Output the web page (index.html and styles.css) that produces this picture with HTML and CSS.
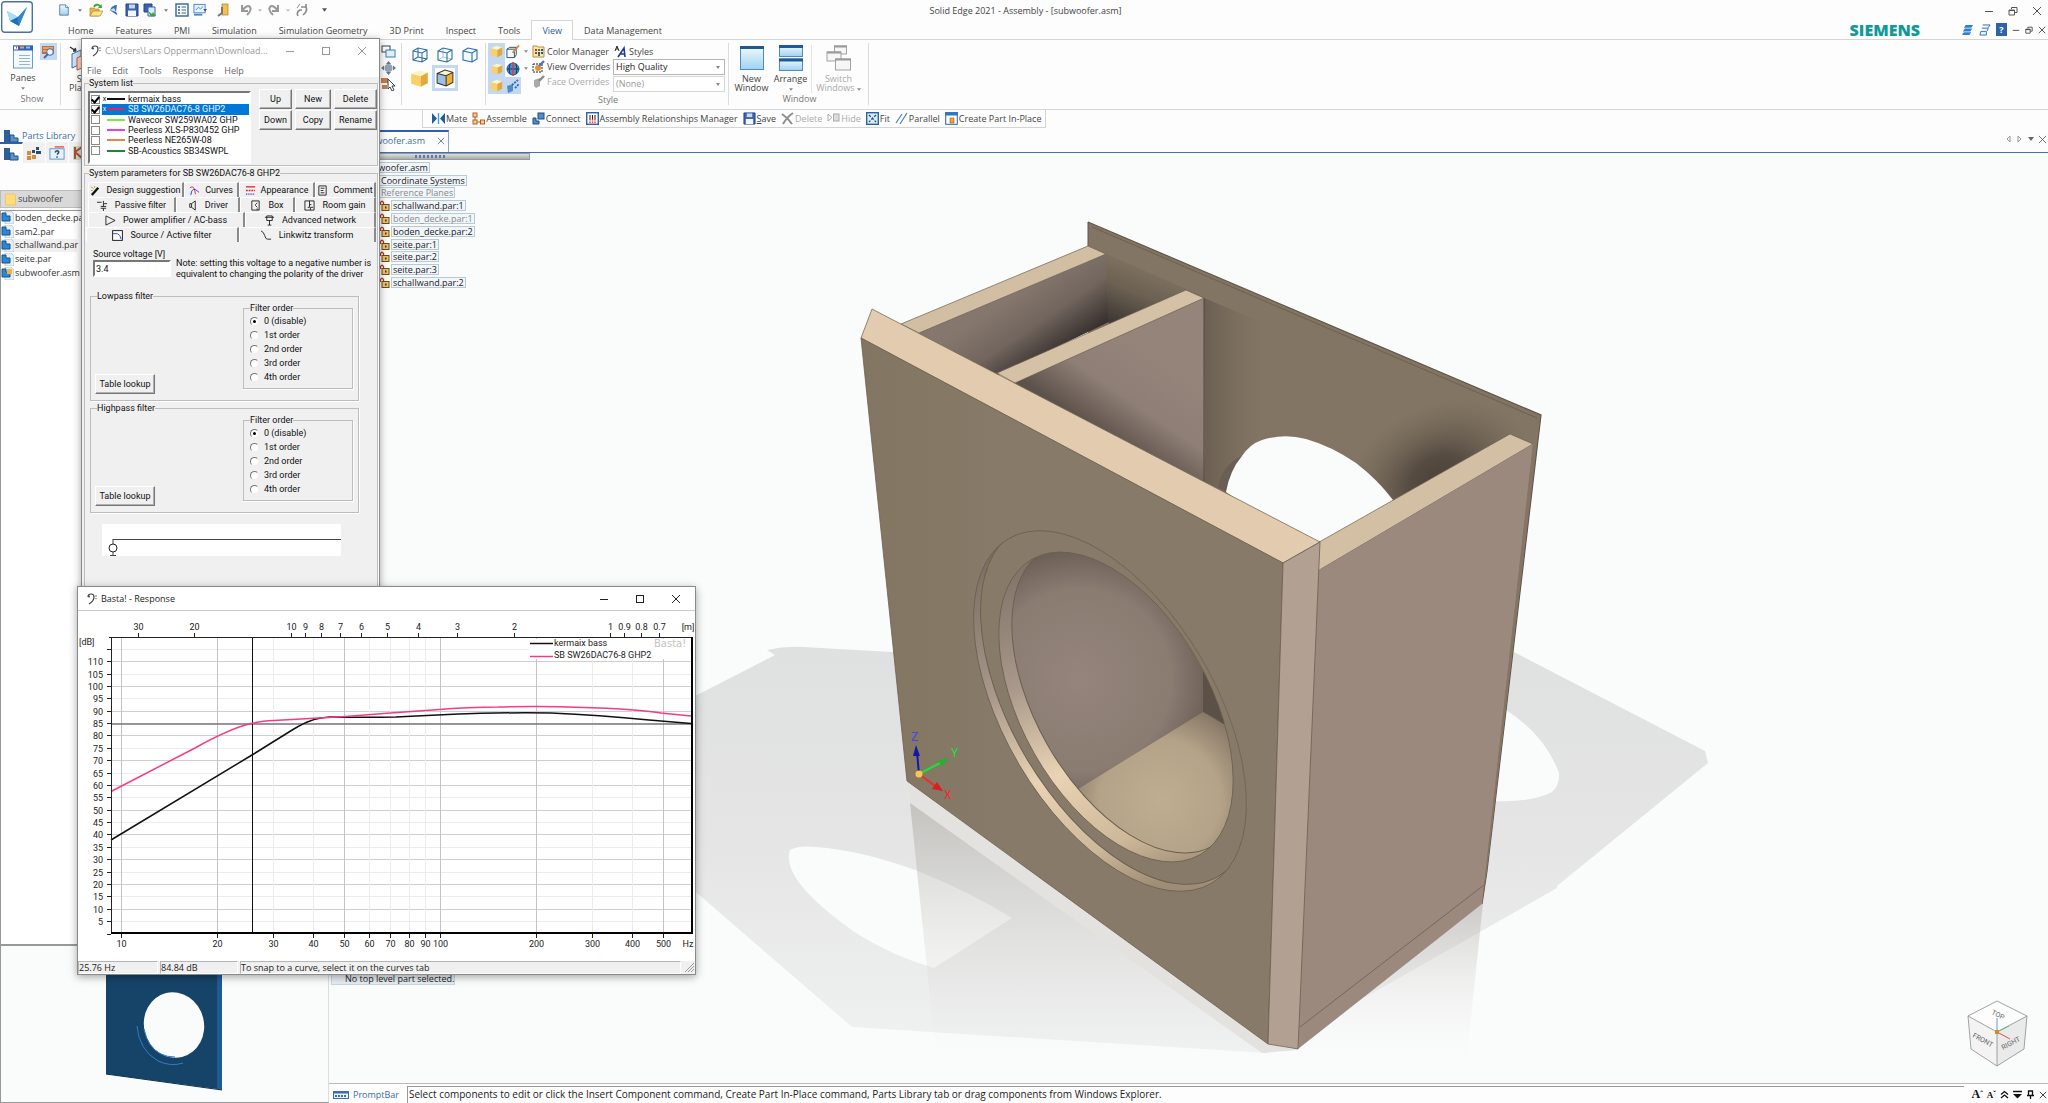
FILE: index.html
```html
<!DOCTYPE html>
<html lang="en">
<head>
<meta charset="utf-8">
<title>Solid Edge 2021 - Assembly - [subwoofer.asm]</title>
<link rel="stylesheet" href="styles.css">
</head>
<body>
<svg class="sprite" aria-hidden="true">
  <defs>
    <linearGradient id="gold" x1="0" y1="0" x2="1" y2="1"><stop offset="0" stop-color="#ffeeb0"/><stop offset="1" stop-color="#eea92a"/></linearGradient>
    <linearGradient id="sky" x1="0" y1="0" x2="0" y2="1"><stop offset="0" stop-color="#f2faff"/><stop offset="1" stop-color="#9fd2f0"/></linearGradient>
  </defs>
  <symbol id="bass" viewBox="0 0 10 12"><path d="M1 4Q1 1 4 1Q7 1 7 4Q7 8 2 11" fill="none" stroke="#444" stroke-width="1.2"/><circle cx="2" cy="3.500" r="1" fill="#444"/><circle cx="9" cy="3" r=".7" fill="#444"/><circle cx="9" cy="5.6" r=".7" fill="#444"/></symbol>
  <symbol id="w-min" viewBox="0 0 10 10"><path d="M1 5.5H9" stroke="currentColor"/></symbol>
  <symbol id="w-max" viewBox="0 0 10 10"><rect x="1.5" y="1.5" width="7" height="7" fill="none" stroke="currentColor"/></symbol>
  <symbol id="w-res" viewBox="0 0 10 10"><path d="M3.5 3V1.5H9V6.500H7M1 4H6.500V9H1Z" fill="none" stroke="currentColor"/><path d="M1 4.500H6.500" stroke="currentColor"/></symbol>
  <symbol id="w-x" viewBox="0 0 10 10"><path d="M1 1L9 9M9 1L1 9" stroke="currentColor"/></symbol>
  <symbol id="caret" viewBox="0 0 6 4"><path d="M0 0H6L3 4Z" fill="currentColor"/></symbol>
  <symbol id="page" viewBox="0 0 12 14"><path d="M1 1H8L11 4V13H1Z" fill="url(#sky)" stroke="#4a7aa8"/><path d="M8 1V4H11" fill="#fff" stroke="#4a7aa8"/></symbol>
  <symbol id="open" viewBox="0 0 14 14"><path d="M1 13V5H5L6 6H10V13Z" fill="#e8b84a" stroke="#a87a20" stroke-width=".6"/><path d="M1 13L4 8H14L11 13Z" fill="#ffe08a" stroke="#a87a20" stroke-width=".6"/><path d="M5 4Q7 0 11 3" fill="none" stroke="#36a53a" stroke-width="1.800"/><path d="M9 5L13 5L12.500 1Z" fill="#36a53a"/></symbol>
  <symbol id="share" viewBox="0 0 10 12"><path d="M1 6Q3 1 8 1L7 8Q9 10 8 11L2 7Z" fill="#3d74ae"/><path d="M1 6L5 4L7 8" fill="#cfe2f2"/></symbol>
  <symbol id="disk" viewBox="0 0 14 14"><path d="M1 1H13V13H1Z" fill="#3a62b0" stroke="#234488"/><rect x="4" y="1.500" width="6" height="4" fill="#c8d8f0"/><rect x="3" y="7.500" width="8" height="5.500" fill="#f2f6fc"/></symbol>
  <symbol id="diskall" viewBox="0 0 14 14"><path d="M1 1H9V9H1Z" fill="#3a62b0" stroke="#234488"/><path d="M5 4H12V13H5Z" fill="#dceafa" stroke="#3a62b0"/><path d="M5 8L9 11L10 9L13 13L8 13.500L7 12Z" fill="#38a63c"/></symbol>
  <symbol id="list" viewBox="0 0 14 14"><rect x="1" y="1" width="12" height="12" fill="#fff" stroke="#2f64a0" stroke-width="1.400"/><path d="M3 4H5M3 7H5M3 10H5" stroke="#2f64a0" stroke-width="1.600"/><path d="M6.500 4H11M6.500 7H11M6.500 10H11" stroke="#2f64a0"/></symbol>
  <symbol id="screen" viewBox="0 0 15 14"><rect x="1" y="1" width="12" height="9" fill="#e6f2fc" stroke="#4a86c8"/><path d="M3 7L6 4L8 6L11 3" fill="none" stroke="#4a86c8"/><path d="M1 11H10V13H1Z" fill="#4a86c8"/><path d="M11 6H15L13 9Z" fill="#555"/></symbol>
  <symbol id="door" viewBox="0 0 12 14"><rect x="5" y="1" width="6" height="11" fill="#f0c052" stroke="#a87a20" stroke-width=".7"/><path d="M1 13L5 10V4" fill="none" stroke="#777" stroke-width="2"/></symbol>
  <symbol id="undo" viewBox="0 0 14 14"><path d="M3 2V8H9M3 8Q8 1 11 4Q13 7 8 12" fill="none" stroke="#999" stroke-width="2"/></symbol>
  <symbol id="swap" viewBox="0 0 14 14"><path d="M6 4H11Q13 8 8 12M11 1V5M3 13Q1 9 5 7L7 7" fill="none" stroke="#8a8a8a" stroke-width="1.600"/><path d="M5 1L2 5" stroke="#8a8a8a"/></symbol>
  <symbol id="panes" viewBox="0 0 20 23"><rect x=".5" y=".5" width="19" height="22" fill="#f3f9fd" stroke="#6a9cc8"/><rect y="0" width="20" height="5" fill="#2f66b4"/><rect x="1" y="1" width="4" height="3" fill="#fff"/><rect x="3" y="1" width="1" height="2" fill="#e33"/><rect x="7" y="1" width="4" height="2" fill="#ff9a4a"/><rect x="13" y="1" width="4" height="2" fill="#8fc0ee"/><path d="M6 10H17M6 13H17M6 16H17M6 19H17" stroke="#9db4c6"/></symbol>
  <symbol id="panel" viewBox="0 0 14 14"><rect x="0" y="1" width="12" height="8" fill="#c66a3a"/><path d="M1 3H11M1 6H11" stroke="#ffd9a0"/><circle cx="8" cy="7" r="3.300" fill="#e8f4fc" stroke="#3a6ea8"/><path d="M6 9L2 13" stroke="#3a6ea8" stroke-width="2"/></symbol>
  <symbol id="planes" viewBox="0 0 24 24"><path d="M1 1L7 5M7 5L4 5M7 5L6 2" stroke="#334" fill="none" stroke-width="1.500"/><path d="M3 8L12 4V18L3 22Z" fill="#cfe2f6" stroke="#3a6ea8"/><path d="M8 12L18 7V20L8 24Z" fill="#ffd2c0" stroke="#c0583a"/></symbol>
  <symbol id="wins" viewBox="0 0 15 14"><rect x="1" y="1" width="8" height="6" fill="#fff" stroke="#345"/><rect x="5" y="5" width="9" height="7" fill="#dff0fc" stroke="#3a7ab8"/></symbol>
  <symbol id="move" viewBox="0 0 15 14"><path d="M7.500 0L10 3H5ZM7.500 14L10 11H5ZM0 7L3 4.500V9.500ZM15 7L12 4.500V9.500Z" fill="#678"/><circle cx="7.500" cy="7" r="4" fill="#8fa3b2"/></symbol>
  <symbol id="pick" viewBox="0 0 15 14"><path d="M0 1H7V6H0ZM1 8H6V12H1Z" fill="#cf7a45"/><path d="M7 2L14 9H11L13 13L11 14L9 10L7 12Z" fill="#fff" stroke="#345"/></symbol>
  <symbol id="cube" viewBox="0 0 16 16"><path d="M1 4L6 1L15 3V12L10 15L1 13Z" fill="#f3f9fe"/><path d="M1 4L10 6L15 3M10 6V15M1 4L6 1L15 3V12L10 15L1 13Z" fill="none" stroke="#2c6fad" stroke-width="1.100"/></symbol>
  <symbol id="cubewire" viewBox="0 0 16 16"><path d="M1 4L10 6L15 3M10 6V15M1 4L6 1L15 3V12L10 15L1 13ZM6 1V10L1 13M6 10L15 12" fill="none" stroke="#2c6fad" stroke-width="1.100"/></symbol>
  <symbol id="cubehid" viewBox="0 0 16 16"><path d="M6 1V10L1 13M6 10L15 12" fill="none" stroke="#a9c6e0"/><path d="M1 4L10 6L15 3M10 6V15M1 4L6 1L15 3V12L10 15L1 13Z" fill="none" stroke="#2c6fad" stroke-width="1.100"/></symbol>
  <symbol id="cubegold" viewBox="0 0 16 16"><path d="M1 4L8 1L15 3L9 6Z" fill="#fff3c8"/><path d="M1 4L9 6V15L1 12.500Z" fill="#fbcf6a"/><path d="M9 6L15 3V12L9 15Z" fill="#e5a83c"/></symbol>
  <symbol id="cubeedge" viewBox="0 0 16 16"><path d="M1 4L8 1L15 3L9 6Z" fill="#fff3c8"/><path d="M1 4L9 6V15L1 12.500Z" fill="#9cc0e2"/><path d="M9 6L15 3V12L9 15Z" fill="#f3b02e"/><path d="M1 4L8 1L15 3V12L9 15L1 12.500ZM1 4L9 6L15 3M9 6V15" fill="none" stroke="#333" stroke-width=".9"/></symbol>
  <symbol id="cubepen" viewBox="0 0 15 14"><path d="M1 4H9V13H1ZM1 4L4 2H11L9 4M11 2V10L9 13" fill="#f3f9fe" stroke="#2a4a70"/><path d="M14 0L7 8" stroke="#d88a3a" stroke-width="2"/></symbol>
  <symbol id="globe" viewBox="0 0 14 14"><circle cx="7" cy="7" r="6" fill="#4a90d0" stroke="#27568a"/><path d="M1 7H13M4 2Q2 7 4 12M10 2Q12 7 10 12" stroke="#123a66" fill="none"/><path d="M7 0V14" stroke="#e23b2e" stroke-width="1.400"/></symbol>
  <symbol id="pipe" viewBox="0 0 14 14"><path d="M1 7L7 5V12L2 14Z" fill="#4c8cca"/><path d="M6 6L12 1M9 9L13 5" stroke="#2d6cab" stroke-width="1.800" stroke-dasharray="2 1"/></symbol>
  <symbol id="palette" viewBox="0 0 13 13"><path d="M1 1H5L6 2H12V12H1Z" fill="#ffe7a8" stroke="#b89040"/><path d="M3 5H5M3 8H5" stroke="#c33" stroke-width="2"/><path d="M6 5H8M6 10H8" stroke="#2a8a3a" stroke-width="2"/><path d="M9 5H11M9 8H11M6 8H8" stroke="#2a4ab8" stroke-width="2"/></symbol>
  <symbol id="brush" viewBox="0 0 13 13"><rect x="1" y="4" width="9" height="8" fill="#fff" stroke="#222" stroke-dasharray="2 1"/><circle cx="6" cy="8" r="3" fill="#e8922e"/><path d="M12 1L7 6" stroke="#4a78b0" stroke-width="2.400"/></symbol>
  <symbol id="brushoff" viewBox="0 0 13 13"><path d="M2 5L8 3V11L4 13L2 11Z" fill="#a9a9a9"/><path d="M12 1L7 6" stroke="#8a8a8a" stroke-width="2.400"/></symbol>
  <symbol id="styles" viewBox="0 0 13 13"><path d="M1 6L3 1L5 6M2 4H4" stroke="#223" fill="none"/><path d="M4 12L10 3L11 12M6 9H11" stroke="#1c3a9a" stroke-width="1.600" fill="none"/></symbol>
  <symbol id="newwin" viewBox="0 0 24 24"><rect x=".5" y=".5" width="23" height="23" fill="url(#sky)" stroke="#4a8cc4"/><rect width="24" height="3" fill="#1c5a98"/></symbol>
  <symbol id="arrange" viewBox="0 0 24 26"><rect x=".5" y=".5" width="23" height="11" fill="url(#sky)" stroke="#4a8cc4"/><rect width="24" height="3" fill="#1c5a98"/><rect x=".5" y="14" width="23" height="11.500" fill="url(#sky)" stroke="#4a8cc4"/><rect y="13.500" width="24" height="3" fill="#1c5a98"/></symbol>
  <symbol id="switch" viewBox="0 0 26 26"><g fill="#f6f6f6" stroke="#a2a2a2"><rect x="8.500" y="1" width="12" height="8"/><rect x="1" y="7" width="14" height="9"/><rect x="9.500" y="14" width="15" height="11"/></g><path d="M8 1.500H21M1 7.500H15M9 14.500H25" stroke="#999" stroke-width="2"/></symbol>
  <symbol id="mate" viewBox="0 0 13 13"><path d="M0 1L5 6.500L0 12ZM13 1L8 6.500L13 12Z" fill="#1f5d9e"/><path d="M6.500 1V12" stroke="#3fa0e0" stroke-width="1.400"/></symbol>
  <symbol id="assemble" viewBox="0 0 13 13"><path d="M3 3V10H10" fill="none" stroke="#a85a2a"/><g fill="#ffc98a" stroke="#b0602c"><rect x="1" y="1" width="4" height="4"/><rect x="1" y="8" width="4" height="4"/><rect x="8.500" y="8" width="4" height="4"/></g></symbol>
  <symbol id="connect" viewBox="0 0 13 13"><rect x="6" y="1" width="6" height="6" fill="#4e8dca" stroke="#1d4d80"/><path d="M1 6H4V9H7V12H1Z" fill="#4e8dca" stroke="#1d4d80"/></symbol>
  <symbol id="relman" viewBox="0 0 13 13"><rect x=".7" y=".7" width="11.600" height="11.600" fill="#fff" stroke="#2c62a8" stroke-width="1.400"/><path d="M4 3V7M6.500 3V7M9 3V7" stroke="#222"/><path d="M4 7V11M6.500 7V11M9 7V11" stroke="#e33" stroke-width="1.400" stroke-dasharray="1.500 1"/></symbol>
  <symbol id="del" viewBox="0 0 13 13"><path d="M1 2Q7 6 11 12M12 1Q6 5 2 12" stroke="#8f8f8f" stroke-width="2" fill="none"/></symbol>
  <symbol id="hide" viewBox="0 0 13 13"><path d="M1 2V9L5 5.500Z" fill="none" stroke="#aaa"/><rect x="6.500" y="2" width="5.500" height="7" fill="#ddd" stroke="#aaa"/></symbol>
  <symbol id="fit" viewBox="0 0 13 13"><rect x=".7" y=".7" width="11.600" height="11.600" fill="#dcebfa" stroke="#2c62a8" stroke-width="1.400"/><path d="M3 3L10 10M10 3L3 10" stroke="#1c4c90" stroke-width="1.300" stroke-dasharray="2.500 1.500"/></symbol>
  <symbol id="parallel" viewBox="0 0 13 13"><path d="M1 11L7 2M5 12L12 1" stroke="#4a7fc0" stroke-width="1.200"/></symbol>
  <symbol id="create" viewBox="0 0 13 13"><rect x=".7" y=".7" width="11.600" height="11.600" fill="#fff" stroke="#2c62a8"/><rect width="13" height="3.500" fill="#2f78c0"/><path d="M5 6H9V11H5Z" fill="#f0a63a" stroke="#8a5a18" stroke-width=".6"/></symbol>
  <symbol id="lib" viewBox="0 0 16 14"><path d="M1 1H7V13H1Z" fill="#2e5f96"/><path d="M7 6H11V9H15V13H7Z" fill="#5d93c8" stroke="#214f80"/></symbol>
  <symbol id="tree" viewBox="0 0 16 14"><path d="M1 5H5V9H1ZM1 10H5V14H1ZM6 9H10V13H6Z" fill="#d98a3a"/><path d="M6 4H9V7H6ZM10 1H13V4H10ZM10 5H15V8H10Z" fill="#2c4c78"/></symbol>
  <symbol id="help" viewBox="0 0 17 15"><rect x="1" y="3" width="15" height="11" fill="#e8f2fb" stroke="#5f95c8"/><path d="M6 1H16" stroke="#e2554a" stroke-width="1.500"/><path d="M6.500 7Q7 5 9 5Q11 5.500 10 7.500L8.500 9M8.500 11V12.500" stroke="#1f4f8a" stroke-width="1.600" fill="none"/></symbol>
  <symbol id="sens" viewBox="0 0 14 14"><rect width="14" height="14" fill="#c9dcc0"/><path d="M2 1V13M2 6L9 1M2 6L10 13" stroke="#b3483a" stroke-width="2"/></symbol>
  <symbol id="folder" viewBox="0 0 12 13"><path d="M1 1H9L11 2V12H1Z" fill="#ffdc7a" stroke="#e8c05a" stroke-width=".7"/></symbol>
  <symbol id="par" viewBox="0 0 13 13"><path d="M4 0H10L13 3V13H4Z" fill="#e9eef3" stroke="#9fb0be" stroke-width=".6"/><path d="M1 2H5V5H9V10H1Z" fill="#2f87d4" stroke="#155390"/></symbol>
  <symbol id="asm" viewBox="0 0 13 13"><path d="M4 0H10L13 3V13H4Z" fill="#e9eef3" stroke="#9fb0be" stroke-width=".6"/><path d="M1 2H5V5H9V10H1Z" fill="#2f87d4" stroke="#155390"/><rect x="6" y="2" width="5" height="5" fill="#f2b340"/></symbol>
  <symbol id="lock" viewBox="0 0 11 11"><rect x="3" y="4.500" width="7" height="6" fill="#f3c268" stroke="#6d4a1c"/><path d="M1.500 5V2.500Q3 0 4.500 2.500V4" fill="none" stroke="#b0382e" stroke-width="1.300"/><rect x="6" y="6.500" width="1.500" height="2" fill="#333"/></symbol>
  <symbol id="keyb" viewBox="0 0 16 8"><rect x=".5" y=".5" width="15" height="7" fill="#e9f1fa" stroke="#3a6ea8"/><rect width="16" height="2.500" fill="#3a6ea8"/><path d="M2 5H14" stroke="#3a6ea8" stroke-width="2" stroke-dasharray="2 1"/></symbol>
  <symbol id="stack" viewBox="0 0 13 13"><path d="M4 1H12L10 4H2ZM3 5H11L9 8H1ZM2 9H10L8 12H0Z" fill="#2f7ed2"/></symbol>
  <symbol id="stack2" viewBox="0 0 13 13"><path d="M4 1H12L10 4M3 4.500H10L9 7.500M2 8H8V12H1Z" fill="#eaf3fc" stroke="#2f6cb8"/></symbol>
  <symbol id="wand" viewBox="0 0 12 12"><path d="M2 11L9 3" stroke="#111" stroke-width="2.600"/><path d="M1 2L4 4M5 1V3M1 6H3" stroke="#b9a021"/></symbol>
  <symbol id="curves" viewBox="0 0 12 12"><path d="M1 3Q6 -1 7 10" fill="none" stroke="#e23"/><path d="M2 11Q3 0 11 8" fill="none" stroke="#24c"/></symbol>
  <symbol id="appear" viewBox="0 0 12 12"><path d="M1 2H11" stroke="#d22" stroke-width="1.400"/><path d="M1 6H11" stroke="#d22" stroke-width="1.400" stroke-dasharray="2 1"/><path d="M1 10H11" stroke="#22c" stroke-width="1.400" stroke-dasharray="1 1"/></symbol>
  <symbol id="note" viewBox="0 0 12 12"><path d="M2 1H10V11H2ZM4 3.500H8M4 6H7M4 8.500H8" fill="none" stroke="#222"/></symbol>
  <symbol id="passive" viewBox="0 0 12 12"><path d="M0 2.500H5M7 1V4H11M7 4V7M4 7H10M4 9H10M7 9V12" fill="none" stroke="#222"/></symbol>
  <symbol id="driver" viewBox="0 0 12 12"><path d="M3 4H5V8H3ZM5 4L9 1V11L5 8" fill="none" stroke="#222"/></symbol>
  <symbol id="box" viewBox="0 0 12 12"><path d="M2 1H10V11H2ZM8 3L6 5V6L8 8M7 10H9" fill="none" stroke="#222"/></symbol>
  <symbol id="room" viewBox="0 0 12 12"><path d="M1 1H11V11H1ZM6 1V8H4M6 5H8M10 8H7V11" fill="none" stroke="#222"/></symbol>
  <symbol id="amp" viewBox="0 0 12 12"><path d="M1 1L11 6L1 11Z" fill="none" stroke="#222"/></symbol>
  <symbol id="net" viewBox="0 0 12 12"><path d="M1 2.500H11M3 1H9V6H3ZM6 6V11M4 11H8" fill="none" stroke="#222"/></symbol>
  <symbol id="active" viewBox="0 0 12 12"><rect x=".7" y=".7" width="10.600" height="10.600" fill="#fff" stroke="#111"/><path d="M1 4H6Q9 5 10 10" fill="none" stroke="#24d"/></symbol>
  <symbol id="linkw" viewBox="0 0 12 12"><path d="M0 1Q3 2 4 6Q5 10 7 10H11" fill="none" stroke="#222"/></symbol>
</svg>

<header class="app-head">
  <svg class="logo" viewBox="0 0 32 32"><rect x=".7" y=".7" width="30.600" height="30.600" rx="3" fill="#fdfeff" stroke="#4a70a6" stroke-width="1.400"/><path d="M6 10L17 16L26 6L18 25L9 20Z" fill="#5cb0e4"/><path d="M6 10L17 16L9 20Z" fill="#a9dcf5"/><path d="M17 16L26 6L18 25Z" fill="#2f86c8"/><path d="M9 20L17 16L18 25Z" fill="#1f6fb2"/></svg>
  <div class="head-main">
    <div class="title-row">
      <div class="quick">
        <button class="tb" aria-label="New"><svg class="i12"><use href="#page"/></svg></button><button class="tb car" aria-label="New options"><svg><use href="#caret"/></svg></button>
        <button class="tb" aria-label="Open"><svg class="i14"><use href="#open"/></svg></button>
        <button class="tb" aria-label="Share"><svg class="i12"><use href="#share"/></svg></button>
        <button class="tb" aria-label="Save"><svg class="i14"><use href="#disk"/></svg></button>
        <button class="tb" aria-label="Save all"><svg class="i14"><use href="#diskall"/></svg></button><button class="tb car" aria-label="Save options"><svg><use href="#caret"/></svg></button>
        <button class="tb" aria-label="Properties"><svg class="i14"><use href="#list"/></svg></button>
        <button class="tb" aria-label="Display"><svg class="i14"><use href="#screen"/></svg></button>
        <button class="tb wide" aria-label="Close document"><svg class="i14"><use href="#door"/></svg></button>
        <button class="tb" aria-label="Undo"><svg class="i14"><use href="#undo"/></svg></button><button class="tb car dim" aria-label="Undo options"><svg><use href="#caret"/></svg></button>
        <button class="tb" aria-label="Redo"><svg class="i14 flip"><use href="#undo"/></svg></button><button class="tb car dim" aria-label="Redo options"><svg><use href="#caret"/></svg></button>
        <button class="tb" aria-label="Repeat"><svg class="i14"><use href="#swap"/></svg></button>
        <button class="tb more" aria-label="Customize"><svg class="caretL"><use href="#caret"/></svg></button>
      </div>
      <h1 class="app-title">Solid Edge 2021 - Assembly - [subwoofer.asm]</h1>
      <div class="wbtns"><button class="tb" aria-label="Minimize"><svg class="i10"><use href="#w-min"/></svg></button><button class="tb" aria-label="Restore"><svg class="i10"><use href="#w-res"/></svg></button><button class="tb" aria-label="Close"><svg class="i10"><use href="#w-x"/></svg></button></div>
    </div>
    <div class="tab-row">
      <nav class="rtabs"><a href="#">Home</a><a href="#">Features</a><a href="#">PMI</a><a href="#">Simulation</a><a href="#">Simulation Geometry</a><a href="#">3D Print</a><a href="#">Inspect</a><a href="#">Tools</a><a href="#" class="on">View</a><a href="#">Data Management</a></nav>
      <span class="brand">SIEMENS</span>
      <div class="docbtns"><button class="tb" aria-label="Expand"><svg class="i12"><use href="#stack"/></svg></button><button class="tb" aria-label="Layers"><svg class="i12"><use href="#stack2"/></svg></button><button class="tb q" aria-label="Help">?</button><button class="tb" aria-label="Minimize document"><svg class="i8"><use href="#w-min"/></svg></button><button class="tb" aria-label="Restore document"><svg class="i8"><use href="#w-res"/></svg></button><button class="tb" aria-label="Close document"><svg class="i8"><use href="#w-x"/></svg></button></div>
    </div>
  </div>
</header>

<section class="ribbon">
  <div class="grp g-show">
    <div class="grp-body"><button class="big"><svg class="ic-panes"><use href="#panes"/></svg>Panes<svg class="c5"><use href="#caret"/></svg></button><button class="tb hl" aria-label="Command finder"><svg class="i14"><use href="#panel"/></svg></button></div>
    <span class="cap">Show</span>
  </div>
  <div class="grp g-planes">
    <button class="big left"><svg class="ic24"><use href="#planes"/></svg><span>S<br>Pla</span></button>
    <div class="stack"><svg class="i15"><use href="#wins"/></svg><svg class="i15"><use href="#move"/></svg><svg class="i15"><use href="#pick"/></svg></div>
  </div>
  <div class="grp g-cubes">
    <button class="tb" aria-label="Wireframe"><svg class="i16"><use href="#cubewire"/></svg></button><button class="tb" aria-label="Hidden edges"><svg class="i16"><use href="#cubehid"/></svg></button><button class="tb" aria-label="Visible edges"><svg class="i16"><use href="#cube"/></svg></button>
    <button class="tb" aria-label="Shaded"><svg class="i19"><use href="#cubegold"/></svg></button><button class="tb sel" aria-label="Shaded with edges"><svg class="i18"><use href="#cubeedge"/></svg></button>
  </div>
  <div class="grp g-style">
    <div class="grp-body">
      <div class="minis">
        <button class="tb hl" aria-label="Drop shadow"><svg class="i13"><use href="#cubegold"/></svg></button><button class="tb" aria-label="Sharpen"><svg class="i14"><use href="#cubepen"/></svg></button><svg class="c5"><use href="#caret"/></svg>
        <button class="tb hl" aria-label="Floor reflection"><svg class="i12"><use href="#cubegold"/></svg></button><button class="tb" aria-label="Perspective"><svg class="i14"><use href="#globe"/></svg></button><svg class="c5"><use href="#caret"/></svg>
        <button class="tb hl" aria-label="Ambient shadow"><svg class="i13"><use href="#cubegold"/></svg></button><button class="tb hl" aria-label="Pipes"><svg class="i14"><use href="#pipe"/></svg></button>
      </div>
      <div class="links">
        <button class="lnk"><svg class="i13"><use href="#palette"/></svg>Color Manager</button>
        <button class="lnk"><svg class="i13"><use href="#brush"/></svg>View Overrides</button>
        <button class="lnk off" disabled><svg class="i13"><use href="#brushoff"/></svg>Face Overrides</button>
      </div>
      <div class="styles-col">
        <button class="lnk"><svg class="i13"><use href="#styles"/></svg>Styles</button>
        <div class="sel-wrap"><select aria-label="View style"><option>High Quality</option></select></div>
        <div class="sel-wrap off"><select aria-label="Face style" disabled><option>(None)</option></select></div>
      </div>
    </div>
    <span class="cap">Style</span>
  </div>
  <div class="grp g-win">
    <div class="grp-body">
      <button class="big"><svg class="ic24"><use href="#newwin"/></svg>New<br>Window</button>
      <button class="big"><svg class="ic24"><use href="#arrange"/></svg>Arrange<svg class="c5"><use href="#caret"/></svg></button>
      <button class="big off" disabled><svg class="ic26"><use href="#switch"/></svg><span>Switch<br>Windows <svg class="c5"><use href="#caret"/></svg></span></button>
    </div>
    <span class="cap">Window</span>
  </div>
</section>

<div class="cmdbar-row"><div class="cmdbar">
  <button class="lnk"><svg class="i13"><use href="#mate"/></svg>Mate</button>
  <button class="lnk"><svg class="i13"><use href="#assemble"/></svg>Assemble</button>
  <button class="lnk"><svg class="i13"><use href="#connect"/></svg>Connect</button>
  <button class="lnk"><svg class="i13"><use href="#relman"/></svg>Assembly Relationships Manager</button>
  <button class="lnk"><svg class="i13"><use href="#disk"/></svg><span><u>S</u>ave</span></button>
  <button class="lnk off" disabled><svg class="i13"><use href="#del"/></svg>Delete</button>
  <button class="lnk off" disabled><svg class="i13"><use href="#hide"/></svg>Hide</button>
  <button class="lnk"><svg class="i13"><use href="#fit"/></svg>Fit</button>
  <button class="lnk"><svg class="i13"><use href="#parallel"/></svg>Parallel</button>
  <button class="lnk"><svg class="i13"><use href="#create"/></svg>Create Part In-Place</button>
</div></div>

<main class="work">
  <aside class="library">
    <h2 class="lib-title"><svg class="i16"><use href="#lib"/></svg>Parts Library</h2>
    <div class="lib-tabs"><button class="tb on" aria-label="Library"><svg class="i16"><use href="#lib"/></svg></button><button class="tb" aria-label="Family"><svg class="i16"><use href="#tree"/></svg></button><button class="tb" aria-label="Help"><svg class="i16"><use href="#help"/></svg></button><button class="tb" aria-label="Sensors"><svg class="i14"><use href="#sens"/></svg></button></div>
    <div class="lib-path"><svg class="i13"><use href="#folder"/></svg>subwoofer</div>
    <div class="lib-files">
      <ul>
        <li><svg class="i13"><use href="#par"/></svg>boden_decke.par</li>
        <li><svg class="i13"><use href="#par"/></svg>sam2.par</li>
        <li class="picked"><svg class="i13"><use href="#par"/></svg>schallwand.par</li>
        <li><svg class="i13"><use href="#par"/></svg>seite.par</li>
        <li><svg class="i13"><use href="#asm"/></svg>subwoofer.asm</li>
      </ul>
    </div>
    <div class="preview"><svg viewBox="0 2 120 150" class="thumb"><path d="M1 0H112V145L1 130Z" fill="#164469"/><path d="M112 0H117V146L112 145Z" fill="#215a96"/><path d="M1 130L117 146" stroke="#10324f"/><ellipse cx="69" cy="81" rx="30" ry="33" transform="rotate(-14 69 81)" fill="#fafcfb"/><path d="M39 85Q43 104 56 110Q62 113 70 113M32 82Q34 106 53 117Q66 123 78 119" fill="none" stroke="#2f7cc8"/></svg></div>
  </aside>

  <section class="doc">
    <div class="doc-tabs"><div class="doc-tab"><span>subwoofer.asm</span><button class="tb" aria-label="Close tab"><svg class="i8"><use href="#w-x"/></svg></button></div>
      <div class="doc-nav"><svg class="i8" viewBox="0 0 8 8"><path d="M6 1V7L3 4Z" fill="none" stroke="#999"/></svg><svg class="i8" viewBox="0 0 8 8"><path d="M2 1V7L5 4Z" fill="none" stroke="#999"/></svg><svg class="c6"><use href="#caret"/></svg><button class="tb" aria-label="Close view"><svg class="i9"><use href="#w-x"/></svg></button></div></div>
    <div class="canvas">
      <svg class="scene" viewBox="329 153 1719 930" preserveAspectRatio="xMidYMid slice">
        <defs>
          <linearGradient id="shade1" x1="1020" y1="290" x2="1062" y2="352" gradientUnits="userSpaceOnUse"><stop offset="0" stop-color="#85776e"/><stop offset=".5" stop-color="#71655d"/><stop offset="1" stop-color="#37302e"/></linearGradient>
          <linearGradient id="shade2" x1="1150" y1="350" x2="1095" y2="430" gradientUnits="userSpaceOnUse"><stop offset="0" stop-color="#94847a"/><stop offset=".55" stop-color="#8e7e75"/><stop offset="1" stop-color="#5d524b"/></linearGradient>
          <linearGradient id="backdark" x1="1150" y1="262" x2="1125" y2="325" gradientUnits="userSpaceOnUse"><stop offset="0" stop-color="#827563"/><stop offset=".5" stop-color="#6c6152"/><stop offset="1" stop-color="#3f3a36"/></linearGradient>
          <radialGradient id="backright" cx="0" cy="0" r="1" gradientUnits="userSpaceOnUse" gradientTransform="translate(1438 480) rotate(-30) scale(100 74)"><stop offset="0" stop-color="#4c4239"/><stop offset=".3" stop-color="#554b41"/><stop offset="1" stop-color="#6f6455" stop-opacity="0"/></radialGradient>
          <linearGradient id="backleft" x1="1204" y1="0" x2="1260" y2="0" gradientUnits="userSpaceOnUse"><stop offset="0" stop-color="#5f554a" stop-opacity=".7"/><stop offset="1" stop-color="#6f6455" stop-opacity="0"/></linearGradient>
          <linearGradient id="rim" x1="1040" y1="540" x2="1170" y2="880" gradientUnits="userSpaceOnUse"><stop offset="0" stop-color="#7c6e64"/><stop offset=".35" stop-color="#a8978a"/><stop offset=".62" stop-color="#e9d3b4"/><stop offset=".85" stop-color="#cdb899"/><stop offset="1" stop-color="#9f8c76"/></linearGradient>
          <radialGradient id="bowl" cx="1080" cy="680" r="165" gradientUnits="userSpaceOnUse"><stop offset="0" stop-color="#94847b"/><stop offset=".55" stop-color="#8b7c72"/><stop offset="1" stop-color="#51463e"/></radialGradient>
          <radialGradient id="floor" cx="1160" cy="800" r="100" gradientUnits="userSpaceOnUse"><stop offset="0" stop-color="#bfad90"/><stop offset=".6" stop-color="#b5a389"/><stop offset="1" stop-color="#857665"/></radialGradient>
          <linearGradient id="mirror" x1="0" y1="800" x2="0" y2="1066" gradientUnits="userSpaceOnUse"><stop offset="0" stop-color="#aeaba6" stop-opacity=".6"/><stop offset="1" stop-color="#e8e8e6" stop-opacity="0"/></linearGradient>
          <linearGradient id="mirror2" x1="0" y1="900" x2="0" y2="1066" gradientUnits="userSpaceOnUse"><stop offset="0" stop-color="#b9b5b3" stop-opacity=".6"/><stop offset="1" stop-color="#f0eeee" stop-opacity="0"/></linearGradient>
          <linearGradient id="cast" x1="0" y1="640" x2="0" y2="1055" gradientUnits="userSpaceOnUse"><stop offset="0" stop-color="#dfe1e0"/><stop offset=".5" stop-color="#e4e5e4"/><stop offset="1" stop-color="#f0f1f1"/></linearGradient>
          <linearGradient id="front" x1="860" y1="0" x2="1000" y2="0" gradientUnits="userSpaceOnUse"><stop offset="0" stop-color="#827561"/><stop offset="1" stop-color="#877a68"/></linearGradient>
          <clipPath id="recess"><ellipse cx="0" cy="0" rx="200" ry="105.500" transform="translate(1110 711) rotate(59.400)"/></clipPath>
          <clipPath id="hole"><ellipse cx="0" cy="0" rx="170" ry="94" transform="translate(1116 707) rotate(60.400)"/></clipPath>
          <clipPath id="inner"><ellipse cx="0" cy="0" rx="170" ry="94" transform="translate(1129 698) rotate(60.400)"/></clipPath>
        </defs>
        <path d="M767 650Q785 646 803 647L892 652H1514L1705 751L1708 763L1557 886V888L1267 1053L852 1027L697 893L660 860V720L697 695L775 655Z M790 850Q798 845 816 847Q860 850 918 871Q970 892 1012 918L934 968Q890 955 856 933Q780 880 790 850Z M1506 710Q1545 735 1559 773Q1560 785 1552 792Q1530 803 1494 801Z" fill="url(#cast)" fill-rule="evenodd"/>
        <path d="M910 803L912 785L1268 1044L1290 1066H937Z" fill="url(#mirror)"/>
        <path d="M1298 1049L1483 903L1466 1066H1290Z" fill="url(#mirror2)"/>
        <path d="M907 781L1268 1044L1298 1050L1262 1053L910 803Z" fill="#e3e2df"/>
        <path d="M1088 222L1541 415L1487 871L1482 904L1400 900V560L1321 570L1088 450Z" fill="#827563"/>
        <path d="M1106 254L1204 297L1109 322Z" fill="url(#backdark)"/><path d="M1106 254L1186 289L1109 325Z" fill="url(#backdark)"/>
        <path d="M1204 298L1280 330V500H1204Z" fill="url(#backleft)"/>
        <path d="M1290 400L1380 348L1538 415L1533 444L1393 510Z" fill="url(#backright)"/>
        <path d="M1218 487Q1222 465 1242 456L1226 492Z" fill="#6b5e55"/>
        <path d="M1226 492Q1230 470 1242 456Q1250 444 1262 440Q1284 433 1306 439Q1331 446 1356 463Q1378 480 1393 500L1405 510L1321 560Z" fill="#fafcfb"/>
        <path d="M1088 222L1541 415L1487 871L1482 904" fill="none" stroke="#62574a" stroke-width="1.200"/><path d="M1092 227L1537 418" stroke="#6c604f" fill="none"/>
        <path d="M1088 222V246" stroke="#62574a"/>
        <path d="M1106 254L1109 322L996 376L919 337V332Z" fill="url(#shade1)"/>
        <path d="M1088 246L1106 254L919 333L901 324Z" fill="#d2bea2" stroke="#6d604f" stroke-width=".7"/>
        <path d="M1204 298L1205 490L1014 386V382Z" fill="url(#shade2)"/>
        <path d="M1204 298V481" stroke="#51473f"/>
        <path d="M1186 290L1204 298L1015 383L997 373Z" fill="#d4c1a6" stroke="#6d604f" stroke-width=".7"/>
        <path d="M1510 434L1533 444L1321 569L1314 573V545L1321 541Z" fill="#d3bfa4" stroke="#6d604f" stroke-width=".7"/>
        <path d="M1314 573L1321 569L1533 444L1482 904L1298 1049L1290 1045Z" fill="#9b897e"/>
        <path d="M1300 1027L1484 885" stroke="#75675d" fill="none"/><path d="M1533 444L1540 416L1487 871L1482 904Z" fill="#857566"/>
        <path d="M872 309L861 338L1283 563L1320 542Z" fill="#e2cbae" stroke="#7a6b58" stroke-width=".8"/>
        <path d="M861 338L1283 563L1268 1044L907 781Z" fill="url(#front)" stroke="#6c604f" stroke-width=".8"/>
        <path d="M1283 563L1320 542L1298 1049L1268 1044Z" fill="#b2a093" stroke="#6c604f" stroke-width=".8"/>
        <g clip-path="url(#recess)"><rect x="960" y="520" width="300" height="380" fill="url(#rim)"/><ellipse cx="0" cy="0" rx="200" ry="105.500" transform="translate(1117 704) rotate(59.400)" fill="#877a68" stroke="#6c604f"/></g>
        <ellipse cx="0" cy="0" rx="200" ry="105.500" transform="translate(1110 711) rotate(59.400)" fill="none" stroke="#6c604f" stroke-width=".8"/>
        <g clip-path="url(#hole)"><rect x="980" y="540" width="280" height="340" fill="url(#rim)"/>
          <g clip-path="url(#inner)"><rect x="980" y="530" width="280" height="340" fill="url(#bowl)"/><path d="M1203 650V712L1240 730V640Z" fill="#5b5146"/><path d="M1075 791L1203 712L1250 740V880H1100Z" fill="url(#floor)"/></g>
          <ellipse cx="0" cy="0" rx="170" ry="94" transform="translate(1129 698) rotate(60.400)" fill="none" stroke="#6c604f"/></g>
        <ellipse cx="0" cy="0" rx="170" ry="94" transform="translate(1116 707) rotate(60.400)" fill="none" stroke="#6c604f" stroke-width=".8"/>
        <g class="triad"><path d="M919 774L917 752" stroke="#1418a8" stroke-width="2"/><path d="M916 745L920 756H913Z" fill="#1418a8"/><path d="M919 774L940 763" stroke="#1be038" stroke-width="2"/><path d="M949 758L942 766L938 761Z" fill="#1cb52e"/><path d="M919 774L935 786" stroke="#ee2c2c" stroke-width="2"/><path d="M943 791L932 789L937 782Z" fill="#d32222"/><circle cx="919" cy="774" r="3.500" fill="#f5c84e"/><text x="911" y="741" fill="#4747e6">Z</text><text x="951" y="757" fill="#1be038">Y</text><text x="944" y="799" fill="#ee2c2c">X</text></g>
        <g class="vcube"><path d="M1997 1001L2027 1016L1997 1032L1968 1016Z" fill="#fdfdfd"/><path d="M1968 1016L1997 1032V1066L1971 1049Z" fill="#f3f3f3"/><path d="M2027 1016L1997 1032V1066L2024 1049Z" fill="#eaeaea"/><path d="M1997 1001L2027 1016L2024 1049L1997 1066L1971 1049L1968 1016ZM1968 1016L1997 1032L2027 1016M1997 1032V1066" fill="none" stroke="#8c8c8c" stroke-width=".8"/><path d="M1997 1032V1018" stroke="#5a9ae0"/><path d="M1997 1032L2009 1026" stroke="#5cc070"/><path d="M1997 1032L2010 1039" stroke="#e05050"/><rect x="1995" y="1030" width="4" height="4" fill="#c98f2a"/><text x="1991" y="1014" transform="rotate(26 1991 1014)">TOP</text><text x="1972" y="1037" transform="rotate(28 1972 1037)">FRONT</text><text x="2003" y="1050" transform="rotate(-28 2003 1050)">RIGHT</text></g>
      </svg>
      <div class="pathfinder">
        <div class="grip"></div>
        <ul class="tree">
          <li><span class="tag root">subwoofer.asm</span></li>
          <li><span class="tag">Coordinate Systems</span></li>
          <li><span class="tag dimmed">Reference Planes</span></li>
          <li><svg><use href="#lock"/></svg><span class="tag">schallwand.par:1</span></li>
          <li><svg><use href="#lock"/></svg><span class="tag dimmed">boden_decke.par:1</span></li>
          <li><svg><use href="#lock"/></svg><span class="tag">boden_decke.par:2</span></li>
          <li><svg><use href="#lock"/></svg><span class="tag">seite.par:1</span></li>
          <li><svg><use href="#lock"/></svg><span class="tag">seite.par:2</span></li>
          <li><svg><use href="#lock"/></svg><span class="tag">seite.par:3</span></li>
          <li><svg><use href="#lock"/></svg><span class="tag">schallwand.par:2</span></li>
        </ul>
        <p class="nosel">No top level part selected.</p>
      </div>
    </div>
    <footer class="prompt"><span class="pb"><svg><use href="#keyb"/></svg>PromptBar</span><p>Select components to edit or click the Insert Component command, Create Part In-Place command, Parts Library tab or drag components from Windows Explorer.</p>
      <div class="pbtns"><button class="tb A1" aria-label="Larger text">A<sup>ˆ</sup></button><button class="tb A2" aria-label="Smaller text">A<sup>ˇ</sup></button><svg class="i9" viewBox="0 0 9 9"><path d="M1 4.500L4.500 1.500L8 4.500M1 8L4.500 5L8 8" fill="none" stroke="#111" stroke-width="1.300"/></svg><svg class="i9" viewBox="0 0 9 9"><path d="M0 1.500H9" stroke="#111" stroke-width="1.500"/><path d="M0 4H9L4.500 8.500Z" fill="#111"/></svg><svg class="i9" viewBox="0 0 9 9"><path d="M2.500 5.500V1H6.500V5.500M1 5.500H8M4.500 5.500V9" fill="none" stroke="#111" stroke-width="1.300"/></svg><button class="tb" aria-label="Close prompt bar"><svg class="i8"><use href="#w-x"/></svg></button></div></footer>
  </section>
</main>

<section class="win basta" aria-label="Basta">
  <header class="win-title"><svg class="bass"><use href="#bass"/></svg><h2>C:\Users\Lars Oppermann\Download...</h2><div class="winb"><button class="tb" aria-label="Minimize"><svg class="i10"><use href="#w-min"/></svg></button><button class="tb" aria-label="Maximize"><svg class="i10"><use href="#w-max"/></svg></button><button class="tb" aria-label="Close"><svg class="i10"><use href="#w-x"/></svg></button></div></header>
  <nav class="menu"><a href="#">File</a><a href="#">Edit</a><a href="#">Tools</a><a href="#">Response</a><a href="#">Help</a></nav>
  <div class="basta-body">
    <fieldset class="syslist"><legend>System list</legend>
      <div class="syslist-in">
        <ul class="systems">
          <li><label><input type="checkbox" checked><i>x</i><b class="ln k"></b><span>kermaix bass</span></label></li>
          <li class="cur"><label><input type="checkbox" checked><i>x</i><b class="ln r"></b><span>SB SW26DAC76-8 GHP2</span></label></li>
          <li><label><input type="checkbox"><i></i><b class="ln lg"></b><span>Wavecor SW259WA02 GHP</span></label></li>
          <li><label><input type="checkbox"><i></i><b class="ln m"></b><span>Peerless XLS-P830452 GHP</span></label></li>
          <li><label><input type="checkbox"><i></i><b class="ln o"></b><span>Peerless NE265W-08</span></label></li>
          <li><label><input type="checkbox"><i></i><b class="ln g"></b><span>SB-Acoustics SB34SWPL</span></label></li>
        </ul>
        <div class="sysbtns"><button class="cb">Up</button><button class="cb">New</button><button class="cb">Delete</button><button class="cb">Down</button><button class="cb">Copy</button><button class="cb">Rename</button></div>
      </div>
    </fieldset>
    <fieldset class="params"><legend>System parameters for SB SW26DAC76-8 GHP2</legend>
      <div class="ptabs r1"><button><svg><use href="#wand"/></svg>Design suggestion</button><button><svg><use href="#curves"/></svg>Curves</button><button><svg><use href="#appear"/></svg>Appearance</button><button><svg><use href="#note"/></svg>Comment</button></div>
      <div class="ptabs r2"><button><svg><use href="#passive"/></svg>Passive filter</button><button><svg><use href="#driver"/></svg>Driver</button><button><svg><use href="#box"/></svg>Box</button><button><svg><use href="#room"/></svg>Room gain</button></div>
      <div class="ptabs r3"><button><svg><use href="#amp"/></svg>Power amplifier / AC-bass</button><button><svg><use href="#net"/></svg>Advanced network</button></div>
      <div class="ptabs r4"><button class="on"><svg><use href="#active"/></svg>Source / Active filter</button><button><svg><use href="#linkw"/></svg>Linkwitz transform</button></div>
      <div class="ppage">
        <div class="volt"><div class="field"><label for="sv">Source voltage [V]</label><input id="sv" type="text" value="3.4"></div><p>Note: setting this voltage to a negative number is<br>equivalent to changing the polarity of the driver</p></div>
        <fieldset class="filt"><legend>Lowpass filter</legend><button class="cb">Table lookup</button>
          <fieldset class="order"><legend>Filter order</legend>
            <label><input type="radio" name="lp" checked>0 (disable)</label><label><input type="radio" name="lp">1st order</label><label><input type="radio" name="lp">2nd order</label><label><input type="radio" name="lp">3rd order</label><label><input type="radio" name="lp">4th order</label></fieldset></fieldset>
        <fieldset class="filt"><legend>Highpass filter</legend><button class="cb">Table lookup</button>
          <fieldset class="order"><legend>Filter order</legend>
            <label><input type="radio" name="hp" checked>0 (disable)</label><label><input type="radio" name="hp">1st order</label><label><input type="radio" name="hp">2nd order</label><label><input type="radio" name="hp">3rd order</label><label><input type="radio" name="hp">4th order</label></fieldset></fieldset>
        <svg class="circuit" viewBox="0 0 239 32"><path d="M11 15.500H239M11 15V20M11 28V32M8 31.500H14" stroke="#444" fill="none"/><circle cx="11" cy="24" r="4" fill="#fff" stroke="#222"/></svg>
      </div>
    </fieldset>
  </div>
</section>

<section class="win resp" aria-label="Response">
  <header class="win-title"><svg class="bass"><use href="#bass"/></svg><h2>Basta! - Response</h2><div class="winb"><button class="tb" aria-label="Minimize"><svg class="i10"><use href="#w-min"/></svg></button><button class="tb" aria-label="Maximize"><svg class="i10"><use href="#w-max"/></svg></button><button class="tb" aria-label="Close"><svg class="i10"><use href="#w-x"/></svg></button></div></header>
  <svg class="plot" viewBox="79 611 617 350" id="plot">
    <g id="grid"></g>
    <path d="M112 724H693" stroke="#777" stroke-width="1.500"/>
    <path d="M253.500 637V934" stroke="#111"/>
    <path d="M112 840L253 755L294 729.500Q305 723 311 721Q318 718 331 717Q370 717.500 397 717Q437 715 482 713.300Q520 712.500 552 713Q600 715 650 720L692 723.500" fill="none" stroke="#111" stroke-width="1.500"/>
    <path d="M112 791.500L196 748Q232 728 253 723.300Q262 721 275 720.500L315 718.300L343 716.700L388 713.300L437 709.700Q470 707 499 707Q530 706 560 706.700Q595 707.500 621 709Q650 711 662 713L692 716" fill="none" stroke="#f23c84" stroke-width="1.500"/>
    <path d="M110 637.500H693" stroke="#222"/><path d="M112.500 637V934" stroke="#222"/><path d="M112 933H693V637" stroke="#000" stroke-width="2" fill="none"/>
    <rect x="530" y="639" width="161" height="20" fill="#fff"/>
    <path d="M531 643.500H554" stroke="#111" stroke-width="1.500"/><path d="M531 656.500H554" stroke="#f23c84" stroke-width="1.500"/>
    <text x="555" y="646">kermaix bass</text><text x="555" y="658">SB SW26DAC76-8 GHP2</text><text x="655" y="647" class="wm">Basta!</text>
    <text x="80" y="645">[dB]</text>
  </svg>
  <footer class="wstat"><span>25.76 Hz</span><span>84.84 dB</span><span>To snap to a curve, select it on the curves tab</span><svg viewBox="0 0 12 12"><path d="M2 11L11 2M5 11L11 5M8 11L11 8" stroke="#999"/></svg></footer>
</section>
<script src="plot.js"></script>
</body>
</html>
```
FILE: styles.css
```css
* { box-sizing: border-box; }
:root { --ui: "Open Sans", "Noto Sans", sans-serif; --ms: Roboto, "Liberation Sans", sans-serif; }
body { margin: 0; min-height: 100vh; display: flex; flex-direction: column; position: relative; background: #fdfdfd; color: #444; font: 9px/12px var(--ui); overflow: hidden; }
h1, h2, p, ul { margin: 0; padding: 0; font-weight: normal; font-size: inherit; list-style: none; }
a { color: inherit; text-decoration: none; }
button, input, select { font: inherit; color: inherit; }
button { margin: 0; padding: 0; border: 0; background: none; white-space: nowrap; }
fieldset { margin: 0; padding: 0; border: 0; min-width: 0; }
svg { display: block; flex: none; }
.sprite { position: absolute; width: 0; height: 0; }
.tb { display: flex; align-items: center; justify-content: center; flex: none; }
.i8 { width: 8px; height: 8px; } .i9 { width: 9px; height: 9px; } .i10 { width: 10px; height: 10px; }
.i12 { width: 12px; height: 12px; } .i13 { width: 13px; height: 13px; } .i14 { width: 14px; height: 14px; }
.i15 { width: 15px; height: 14px; } .i16 { width: 16px; height: 16px; } .i18 { width: 18px; height: 18px; } .i19 { width: 19px; height: 19px; }
.flip { transform: scaleX(-1); }
.c5 { width: 4px; height: 3px; color: #888; } .c6 { width: 6px; height: 4px; }

.app-head { display: flex; height: 40px; border-bottom: 1px solid #d4d6d6; flex: none; }
.logo { width: 32px; height: 32px; margin: 1px 0 0 1px; }
.head-main { flex: 1; display: flex; flex-direction: column; }
.title-row { display: flex; height: 21px; align-items: center; }
.quick { display: flex; align-items: center; padding-left: 22px; }
.quick .tb { width: 18px; }
.quick .car { width: 14px; color: #777; } .quick .car svg { width: 4px; height: 3px; }
.quick .dim { color: #bbb; width: 10px; } .quick .wide { width: 28px; } .quick .more { width: 26px; color: #555; }
.caretL { width: 5px; height: 4px; }
.app-title { flex: 1; text-align: center; padding: 2px 0 0 12px; }
.wbtns { display: flex; gap: 14px; padding: 2px 6px 0 0; color: #555; width: 346px; justify-content: flex-end; }
.tab-row { display: flex; height: 19px; }
.rtabs { display: flex; flex: 1; padding-left: 24px; }
.rtabs a { padding: 5px 11px 0; }
.rtabs .on { color: #2c5c9c; border: 1px solid #d4d6d6; border-bottom: 0; background: #fff; padding: 4px 10px 0; margin-bottom: -1px; }
.brand { font: 800 16px/20px "Open Sans", sans-serif; color: #0f9a9a; margin-right: 42px; }
.docbtns { display: flex; gap: 5px; align-items: center; padding-right: 2px; color: #333; }
.docbtns .q { width: 11px; height: 13px; background: #2c62a8; color: #fff; font-weight: bold; }

.ribbon { display: flex; height: 70px; border-bottom: 1px solid #d4d6d6; flex: none; padding-top: 3px; }
.grp { display: flex; flex-direction: column; height: 62px; border-right: 1px solid #dcdcdc; flex: none; }
.grp-body { display: flex; flex: 1; }
.cap { text-align: center; color: #777; height: 12px; }
.big { display: flex; flex-direction: column; align-items: center; line-height: 9px; gap: 3px; }
.big .c5 { margin-top: 2px; }
.big.off, .lnk.off { color: #aaa; }
.big span .c5 { display: inline-block; }
.ic-panes { width: 20px; height: 24px; margin: 2px 0 1px; } .ic24 { width: 24px; height: 26px; } .ic26 { width: 26px; height: 26px; }
.hl { background: #c3d9f1; }
.g-show { width: 61px; padding-left: 10px; } .g-show .cap { padding-right: 6px; }
.g-show .big { width: 26px; margin-right: 4px; } .g-show .hl { width: 17px; height: 17px; }
.g-planes { width: 341px; flex-direction: row; justify-content: space-between; padding: 0 5px 0 8px; }
.big.left { align-items: flex-start; text-align: right; padding-top: 2px; }
.stack { display: flex; flex-direction: column; gap: 2px; padding-top: 2px; }
.g-cubes { width: 84px; display: grid; grid-template-columns: repeat(3, 25px); grid-template-rows: 21px 27px; padding: 1px 0 0 5px; align-content: start; }
.sel { background: #fff; border: 3px solid #c3d9f1; width: 26px; height: 26px; }
.g-style { width: 243px; padding-left: 2px; }
.minis { display: grid; grid-template-columns: 17px 16px 10px; grid-template-rows: repeat(3, 17px); align-content: start; }
.minis > svg { align-self: center; justify-self: center; } .minis .tb { align-self: stretch; }
.lnk { display: flex; align-items: center; gap: 2px; height: 15px; }
.links { padding: 1px 0 0 1px; width: 81px; }
.styles-col { padding: 1px 0 0 1px; width: 113px; }
.styles-col .lnk { padding-left: 1px; }
.sel-wrap { position: relative; margin-bottom: 1px; }
.sel-wrap select { display: block; appearance: none; width: 112px; height: 16px; border: 1px solid #b4b4b4; border-radius: 0; background: #fff; padding: 0 2px; color: #222; opacity: 1; }
.sel-wrap.off select { border-color: #d6d6d6; color: #999; }
.sel-wrap::after { content: ""; position: absolute; right: 5px; top: 7px; border: 2px solid transparent; border-top: 3px solid #888; border-bottom: 0; }
.g-win { width: 140px; padding-left: 4px; } .g-win .grp-body { gap: 2px; padding-top: 2px; } .g-win .big { width: 37px; } .g-win .big.off { width: 54px; border-left: 1px solid #e4e4e4; }
.g-win .cap { padding-right: 2px; }

.cmdbar-row { height: 20px; padding-left: 422px; display: flex; flex: none; }
.cmdbar { display: flex; align-items: center; gap: 5px; height: 18px; border: 1px solid #d4d4d4; border-top: 0; padding: 0 4px 0 9px; }
.cmdbar .lnk { gap: 1px; }

.work { flex: 1; display: flex; min-height: 0; }
.library { width: 329px; flex: none; display: flex; flex-direction: column; }
.lib-title { display: flex; align-items: center; gap: 3px; padding: 0 3px; height: 12px; color: #3a6ea8; }
.lib-tabs { display: flex; height: 21px; }
.lib-tabs .tb { width: 23px; background: #f1f1f1; border-right: 1px solid #fff; }
.lib-tabs .on { border-top: 2px solid #2c62a8; background: #fdfdfd; }
.lib-path { margin-top: 27px; height: 18px; background: #d9d9d9; border: 1px solid #bcbcbc; display: flex; align-items: center; gap: 1px; padding-left: 3px; }
.lib-files { flex: 1; margin-top: 2px; border: 1px solid #999; border-bottom: 0; background: #fff; }
.lib-files ul { height: 69px; display: flex; flex-direction: column; }
.lib-files li { flex: 1; display: flex; align-items: center; gap: 1px; color: #333; }
.lib-files .picked { background: #f0f0f0; width: 76px; }
.preview { height: 159px; border: 1px solid #999; border-top-width: 2px; background: #fafcfb; border-right-color: #ddd; padding: 0 0 0 104px; }
.thumb { width: 120px; height: 150px; }

.doc { flex: 1; display: flex; flex-direction: column; min-width: 0; }
.doc-tabs { height: 23px; display: flex; align-items: flex-end; justify-content: space-between; border-bottom: 1px solid #4470ae; }
.doc-tab { width: 120px; height: 22px; border-top: 2px solid #2c62a8; border-right: 1px solid #8aa6cc; display: flex; align-items: center; justify-content: flex-end; gap: 12px; padding: 0 3px 2px 0; color: #3a6ea8; }
.doc-nav { display: flex; gap: 4px; align-items: center; height: 22px; padding: 0 1px 4px 0; color: #666; }
.canvas { flex: 1; position: relative; overflow: hidden; background: #fafcfb; }
.scene { position: absolute; inset: 0; width: 100%; height: 100%; }
.triad text { font: 12px var(--ms); } .vcube text { font: 7px var(--ms); fill: #666; }
.pathfinder { position: relative; height: 100%; width: 201px; }
.grip { height: 7px; background: linear-gradient(#ddd, #aaa); border: 1px solid #999; display: flex; justify-content: center; }
.grip::after { content: ""; width: 32px; height: 3px; margin: 1px 0 0 2px; background: repeating-linear-gradient(90deg, #5a7aa8 0 2px, transparent 2px 4px); }
.tree { height: 128px; margin-top: 1px; display: flex; flex-direction: column; padding-left: 50px; }
.tree li { flex: 1; display: flex; align-items: center; min-height: 0; }
.tree svg { width: 11px; height: 11px; margin-right: 1px; }
.tag { border: 1px solid #b9c9d6; background: #f1f6fa; padding: 0 1px; line-height: 9px; height: 11px; color: #222; white-space: nowrap; }
.tag.root { margin-left: -18px; } .tag.dimmed { color: #888; }
.nosel { position: absolute; bottom: 98px; left: 2px; width: 124px; height: 12px; border: 1px solid #cdd6dd; background: #e6edf2; padding-left: 13px; line-height: 10px; color: #222; white-space: nowrap; }
.prompt { height: 20px; border-top: 1px solid #bbb; display: flex; background: #fdfdfd; padding-left: 4px; align-items: flex-end; }
.pb { display: flex; align-items: center; gap: 4px; width: 74px; color: #3a6ea8; height: 16px; } .pb svg { width: 16px; height: 8px; }
.prompt p { flex: 1; height: 17px; border-top: 1px solid #999; border-left: 1px solid #999; color: #222; font-size: 10px; line-height: 14px; padding-left: 1px; white-space: nowrap; overflow: hidden; margin-right: 7px; }
.pbtns { display: flex; align-items: center; gap: 4px; height: 17px; padding-right: 1px; color: #111; }
.A1 { font: bold 12px "Liberation Serif", serif; } .A2 { font: bold 9px "Liberation Serif", serif; } .pbtns sup { font-size: 8px; line-height: 0; }

.win { position: absolute; background: #fff; border: 1px solid #8a8a8a; display: flex; flex-direction: column; box-shadow: 0 2px 8px rgba(0,0,0,.35); }
.win-title { height: 24px; display: flex; align-items: center; padding: 0 8px; gap: 4px; color: #222; flex: none; }
.win-title .bass { width: 10px; height: 12px; } .win-title h2 { flex: 1; white-space: nowrap; }
.winb { display: flex; gap: 26px; }
.basta { left: 81px; top: 38px; width: 299px; height: 552px; }
.basta .win-title { color: #999; padding: 0 12px 0 9px; }
.menu { height: 14px; display: flex; padding-left: 5px; gap: 11px; color: #666; flex: none; line-height: 16px; }
.basta-body { flex: 1; background: #f0f0f0; font: 9px/11px var(--ms); color: #111; padding: 1px 1px 0 2px; overflow: hidden; }
.basta-body fieldset { border: 1px solid #bdbdbd; box-shadow: 1px 1px #fff; }
.basta-body legend { padding: 0; margin-left: 4px; line-height: 11px; height: 11px; white-space: nowrap; }
.syslist { height: 88px; } .syslist-in { display: flex; gap: 8px; padding-left: 3px; }
.systems { display: flex; flex-direction: column; width: 164px; height: 73px; margin-top: 2px; border: 2px solid; border-color: #777 #fff #fff #777; background: #fff; padding: 1px 0 6px; }
.systems li { flex: 1; min-height: 0; line-height: 10px; }
.cur { background: linear-gradient(90deg, #fff 12px, #0078d7 12px); color: #e8f2fc; }
.systems label { display: flex; align-items: center; height: 100%; }
.systems input { appearance: none; width: 9px; height: 9px; margin: 0 2px 0 1px; border: 1px solid #888; background: #fff; flex: none; display: flex; justify-content: center; }
.systems input:checked::after { content: ""; width: 3px; height: 6px; border: solid #000; border-width: 0 2px 2px 0; transform: rotate(42deg); margin-top: -1px; }
.systems i { width: 5px; font: 7px/8px var(--ms); text-align: center; flex: none; }
.ln { width: 18px; height: 0; margin-right: 3px; flex: none; border-top: 2px solid; }
.ln + span { white-space: nowrap; }
.k { color: #111; } .r { color: #e8205c; } .lg { color: #7bea3c; } .m { color: #ee3cd8; } .o { color: #ee8240; } .g { color: #158a32; }
.sysbtns { display: grid; grid-template-columns: 33px 36px 43px; grid-auto-rows: 20px; gap: 1px 3px; align-content: start; }
.cb { border: 1px solid; border-color: #fff #777 #777 #fff; box-shadow: inset -1px -1px #b0b0b0; background: #f0f0f0; }
.params { margin-top: 2px; height: 440px; } .params > legend { margin-bottom: 3px; }
.ptabs { display: grid; height: 15px; padding: 0 1px 0 3px; }
.ptabs button { display: flex; align-items: center; justify-content: center; gap: 7px; border-top: 1px solid #fff; border-left: 1px solid #fff; border-right: 2px solid #8a8a8a; line-height: 11px; }
.ptabs svg { width: 11px; height: 11px; }
.ptabs.r1 button { gap: 5px; }
.r1 { grid-template-columns: 96px 55px 76px 1fr; } .r2 { grid-template-columns: 88px 64px 55px 1fr; } .r3 { grid-template-columns: 157px 1fr; } .r4 { grid-template-columns: 153px 1fr; padding-left: 1px; }
.ppage { padding: 7px 6px 0 5px; }
.volt { display: flex; gap: 5px; padding-left: 3px; height: 42px; } .volt .field { width: 78px; display: flex; flex-direction: column; }
.volt input { height: 17px; width: 78px; border: 2px solid; border-color: #777 #fff #fff #777; background: #fff; padding: 0 1px; border-radius: 0; }
.volt p { padding-top: 9px; white-space: nowrap; }
.basta-body .filt { width: 269px; height: 110px; margin-bottom: 2px; display: flex; justify-content: space-between; padding: 0 5px 4px 4px; }
.filt > legend { margin-left: 1px; }
.filt .cb { width: 60px; height: 20px; align-self: flex-end; margin-bottom: 2px; }
.basta-body .order { width: 110px; height: 86px; align-self: flex-end; margin-bottom: 7px; padding: 0 0 0 6px; }
.basta-body .order legend { margin-left: 0; } .basta-body .filt > legend { margin-left: 2px; }
.order label { display: flex; align-items: center; gap: 5px; height: 14px; }
.order input { appearance: none; margin: 0; width: 9px; height: 9px; border-radius: 50%; border: 1px solid; border-color: #777 #eee #eee #777; background: #fff; display: flex; align-items: center; justify-content: center; }
.order input:checked::after { content: ""; width: 3px; height: 3px; border-radius: 50%; background: #000; }
.circuit { width: 239px; height: 32px; background: #fff; margin: 11px 0 0 12px; }

.resp { left: 77px; top: 586px; width: 619px; height: 389px; }
.resp .win-title { border-bottom: 1px solid #ccc; padding-left: 9px; padding-right: 14px; }
.plot { flex: 1; min-height: 0; width: 100%; font: 9px var(--ms); fill: #222; }
.plot .mid { text-anchor: middle; } .plot .end { text-anchor: end; } .plot .wm { font: 10px "DejaVu Sans", sans-serif; fill: #c4c4c4; }
.wstat { height: 13px; background: #f0f0f0; display: grid; grid-template-columns: 80px 78px 1fr 12px; gap: 2px; color: #222; line-height: 13px; }
.wstat span { border: 1px solid; border-color: #b5b5b5 #fff #fff #b5b5b5; line-height: 11px; white-space: nowrap; }
```
FILE: plot.js
```js
// Draws the grid, ticks and axis labels of the response plot.
const ns = 'http://www.w3.org/2000/svg';
const grid = document.getElementById('grid');
const fx = f => 122.2 + 319.2 * Math.log10(f / 10);
const dy = d => 934 - d * 2.476;
function line(x1, y1, x2, y2, c) {
  const l = document.createElementNS(ns, 'path');
  l.setAttribute('d', `M${x1} ${y1}L${x2} ${y2}`);
  l.setAttribute('stroke', c);
  grid.appendChild(l);
}
function label(x, y, t, cls) {
  const e = document.createElementNS(ns, 'text');
  e.setAttribute('x', x); e.setAttribute('y', y); e.setAttribute('class', cls);
  e.textContent = t;
  grid.appendChild(e);
}
const px = v => Math.floor(v) + 0.5;
for (let d = 0; d <= 115; d += 5) {
  const y = px(dy(d));
  if (d) line(112, y, 692, y, d % 10 ? '#ececec' : '#cfcfcf');
  line(108, y, 112, y, '#222');
  if (d && d <= 110) label(104, y + 3, d, 'end');
}
for (const f of [10, 20, 30, 40, 50, 60, 70, 80, 90, 100, 200, 300, 400, 500]) {
  const x = px(fx(f));
  line(x, 638, x, 933, [10, 20, 50, 100, 200, 500].includes(f) ? '#c4c4c4' : '#ececec');
  line(x, 934, x, 938, '#222');
  label(x, 947, f, 'mid');
}
label(689, 947, 'Hz', 'mid');
for (const m of [30, 20, 10, 9, 8, 7, 6, 5, 4, 3, 2, 1, 0.9, 0.8, 0.7]) {
  const x = px(fx(340.5 / m));
  line(x, 633, x, 637, '#222');
  label(x, 630, m, 'mid');
}
label(689, 630, '[m]', 'mid');
```
